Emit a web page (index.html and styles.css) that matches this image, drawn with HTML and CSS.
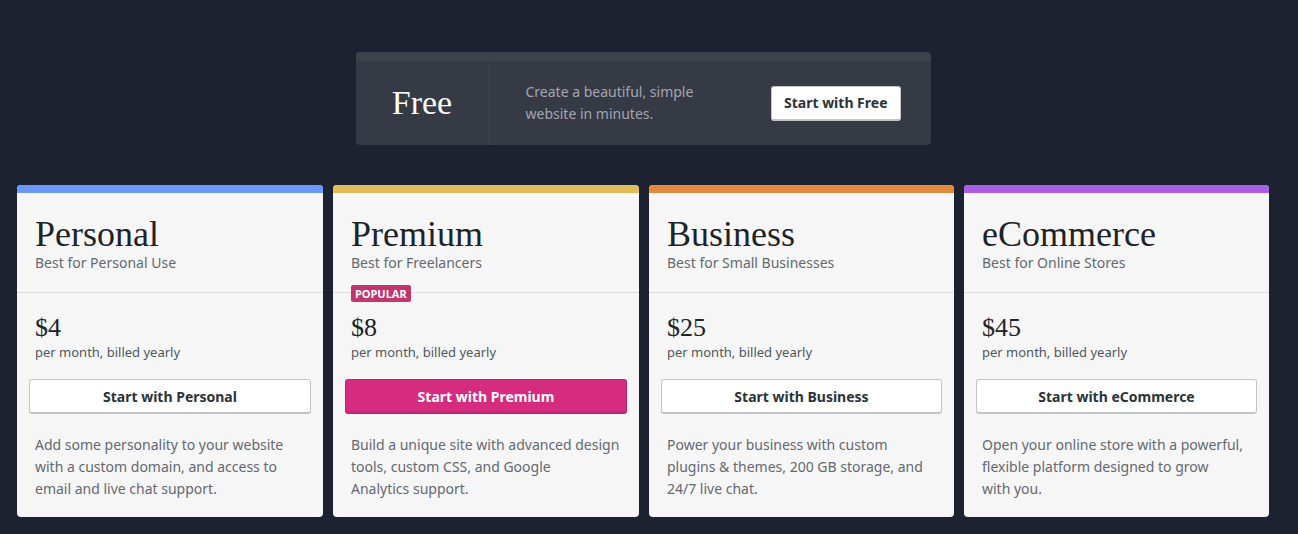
FILE: index.html
```html
<!DOCTYPE html>

<html>
    <head>
        <meta charset="utf-8">

        <link rel="stylesheet" href="styles.css">
    </head>

    <body>
        <div class="page">
            <div class="free">
                <div class="free-name">
                    Free
                </div>

                <div class="free-text">
                    Create a beautiful, simple<br>website in minutes.
                </div>

                <button class="btn">Start with Free</button>
            </div>

            <div class="plans">
                <div class="card">
                    <div class="bar" style="background: #6a97fb;"></div>

                    <div class="head">
                        <div class="title">Personal</div>
                        <div class="sub">Best for Personal Use</div>
                    </div>

                    <div class="body">
                        <div class="price">$4</div>
                        <div class="billed">per month, billed yearly</div>

                        <button class="btn btn-wide">Start with Personal</button>

                        <div class="desc">
                            Add some personality to your website with a custom domain, and access to email and live chat support.
                        </div>
                    </div>
                </div>

                <div class="card">
                    <div class="bar" style="background: #e2bc58;"></div>

                    <div class="head">
                        <div class="title">Premium</div>
                        <div class="sub">Best for Freelancers</div>
                        <div class="badge">Popular</div>
                    </div>

                    <div class="body">
                        <div class="price">$8</div>
                        <div class="billed">per month, billed yearly</div>

                        <button class="btn btn-wide btn-pink">Start with Premium</button>

                        <div class="desc">
                            Build a unique site with advanced design tools, custom CSS, and Google<br>Analytics support.
                        </div>
                    </div>
                </div>

                <div class="card">
                    <div class="bar" style="background: #e0893f;"></div>

                    <div class="head">
                        <div class="title">Business</div>
                        <div class="sub">Best for Small Businesses</div>
                    </div>

                    <div class="body">
                        <div class="price">$25</div>
                        <div class="billed">per month, billed yearly</div>

                        <button class="btn btn-wide">Start with Business</button>

                        <div class="desc">
                            Power your business with custom plugins &amp; themes, 200 GB storage, and 24/7 live chat.
                        </div>
                    </div>
                </div>

                <div class="card">
                    <div class="bar" style="background: #a95ee4;"></div>

                    <div class="head">
                        <div class="title">eCommerce</div>
                        <div class="sub">Best for Online Stores</div>
                    </div>

                    <div class="body">
                        <div class="price">$45</div>
                        <div class="billed">per month, billed yearly</div>

                        <button class="btn btn-wide">Start with eCommerce</button>

                        <div class="desc">
                            Open your online store with a powerful, flexible platform designed to grow<br>with you.
                        </div>
                    </div>
                </div>
            </div>
        </div>
    </body>
</html>
```

FILE: styles.css
```css
body
{
    margin: 0;
    background: #1d2230;
    font-family: "Noto Sans", "Open Sans", sans-serif;
}

.page
{
    width: 1252px;
    margin-left: 17px;
    padding-top: 52px;
}

.free
{
    width: 575px;
    height: 84px;
    margin: 0 auto;
    display: flex;
    align-items: center;
    background: #363a45;
    border-top: 9px solid #3e424b;
    border-radius: 4px;
}

.free-name
{
    width: 133px;
    height: 84px;
    display: flex;
    align-items: center;
    justify-content: center;
    border-right: 1px solid #40444e;
    font-family: "Liberation Serif", serif;
    font-size: 34px;
    color: #ffffff;
}

.free-text
{
    flex: 1;
    padding-left: 36px;
    font-size: 14px;
    line-height: 22px;
    color: #a2a6b0;
}

.btn
{
    height: 35px;
    padding: 0 12px;
    margin-right: 30px;
    background: #ffffff;
    border: 1px solid #c3c4c7;
    border-bottom-width: 2px;
    border-radius: 3px;
    font-family: "Noto Sans", sans-serif;
    font-size: 14px;
    font-weight: bold;
    color: #2c3338;
    cursor: pointer;
}

.plans
{
    display: grid;
    grid-template-columns: 306px 306px 305px 305px;
    gap: 10px;
    margin-top: 40px;
}

.card
{
    background: #f6f6f6;
    border-radius: 4px;
    overflow: hidden;
}

.bar
{
    height: 8px;
}

.head
{
    position: relative;
    padding: 22px 18px 19px;
    border-bottom: 1px solid #dcdcde;
}

.title
{
    font-family: "Liberation Serif", serif;
    font-size: 36px;
    line-height: 38px;
    color: #1d2327;
}

.sub
{
    font-size: 14px;
    line-height: 20px;
    color: #646970;
}

.badge
{
    position: absolute;
    left: 18px;
    bottom: -10px;
    height: 17px;
    padding: 0 4px;
    background: #c2356f;
    border-radius: 2px;
    font-size: 11px;
    line-height: 17px;
    font-weight: bold;
    color: #ffffff;
    text-transform: uppercase;
}

.body
{
    padding: 20px 18px 17px;
}

.price
{
    font-family: "Liberation Serif", serif;
    font-size: 26px;
    line-height: 30px;
    color: #1d2327;
}

.billed
{
    font-size: 13px;
    line-height: 18px;
    color: #50575e;
}

.btn-wide
{
    display: block;
    width: calc(100% + 12px);
    height: 35px;
    margin: 18px -6px 0;
}

.btn-pink
{
    background: #d52c7f;
    border-color: #c0266f;
    color: #ffffff;
}

.desc
{
    margin-top: 20px;
    font-size: 14px;
    line-height: 22px;
    color: #646970;
}
```
